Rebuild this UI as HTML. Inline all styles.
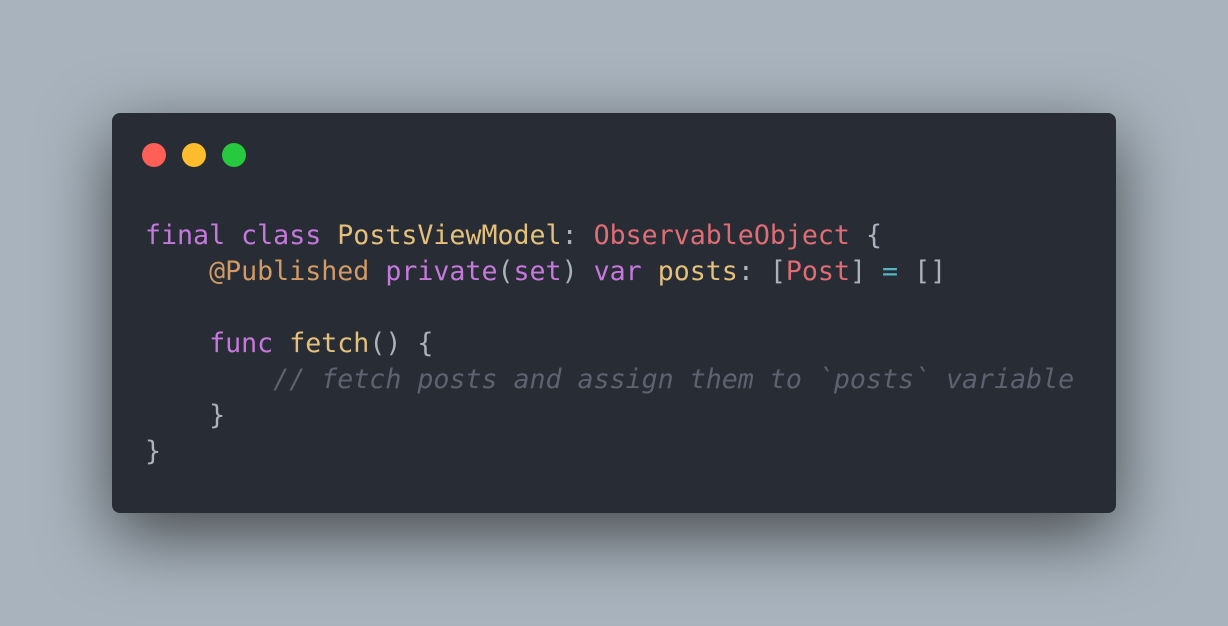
<!DOCTYPE html>
<html><head><style>
html,body{margin:0;padding:0;}
body{width:1228px;height:626px;background:#a8b3bd;position:relative;overflow:hidden;}
.card{position:absolute;left:112px;top:113px;width:1004px;height:400px;background:#282c34;border-radius:8px;box-shadow:0 22px 70px rgba(0,0,0,0.6);}
.dot{position:absolute;top:143px;width:24px;height:24px;border-radius:50%;}
pre{position:absolute;left:145px;top:218px;margin:0;font-family:"DejaVu Sans Mono","Liberation Mono",monospace;font-size:26.62px;line-height:36px;color:#abb2bf;}
.k{color:#c678dd}.y{color:#e5c07b}.r{color:#e06c75}.o{color:#d19a66}.c{color:#56b6c2}.m{color:#5c6370;font-style:italic}
</style></head><body>
<div class="card"></div>
<div class="dot" style="left:142px;background:#ff5f56"></div>
<div class="dot" style="left:182px;background:#ffbd2e"></div>
<div class="dot" style="left:222px;background:#27c93f"></div>
<pre><span class="k">final</span> <span class="k">class</span> <span class="y">PostsViewModel</span>: <span class="r">ObservableObject</span> {
    <span class="o">@Published</span> <span class="k">private</span>(<span class="k">set</span>) <span class="k">var</span> <span class="y">posts</span>: [<span class="r">Post</span>] <span class="c">=</span> []

    <span class="k">func</span> <span class="y">fetch</span>() {
        <span class="m">// fetch posts and assign them to `posts` variable</span>
    }
}</pre>
</body></html>
